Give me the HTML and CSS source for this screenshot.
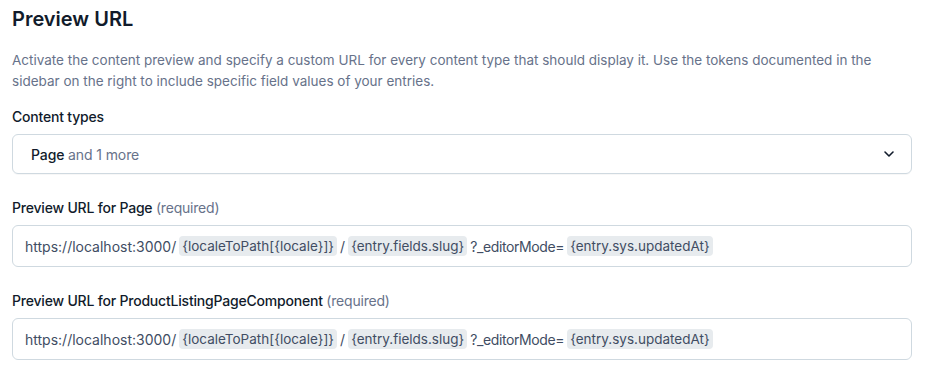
FILE: index.html
```html
<!DOCTYPE html>
<html>
<head>
  <link rel="stylesheet" href="styles.css">
</head>
<body>
  <div class="container">
    <h2 class="title">Preview URL</h2>

    <p class="description">
      Activate the content preview and specify a custom URL for every content type that should display it. Use the tokens documented in the sidebar on the right to include specific field values of your entries.
    </p>

    <div class="field">
      <label class="field-label">Content types</label>
      <div class="select-box">
        <span class="select-value">Page <span class="muted">and 1 more</span></span>
        <svg width="16" height="16" viewBox="0 0 16 16" fill="none" xmlns="http://www.w3.org/2000/svg">
          <path d="M4 6L8 10L12 6" stroke="currentColor" stroke-width="1.6" stroke-linecap="round" stroke-linejoin="round"/>
        </svg>
      </div>
    </div>

    <div class="field">
      <label class="field-label">Preview URL for Page <span class="muted">(required)</span></label>
      <div class="url-input">
        <span>https://localhost:3000/</span>
        <span class="token">{localeToPath[{locale}]}</span>
        <span>/</span>
        <span class="token">{entry.fields.slug}</span>
        <span class="query">?_editorMode=</span>
        <span class="token">{entry.sys.updatedAt}</span>
      </div>
    </div>

    <div class="field">
      <label class="field-label">Preview URL for ProductListingPageComponent <span class="muted">(required)</span></label>
      <div class="url-input">
        <span>https://localhost:3000/</span>
        <span class="token">{localeToPath[{locale}]}</span>
        <span>/</span>
        <span class="token">{entry.fields.slug}</span>
        <span class="query">?_editorMode=</span>
        <span class="token">{entry.sys.updatedAt}</span>
      </div>
    </div>
  </div>
</body>
</html>
```

FILE: styles.css
```css
body {
  font-family: Inter, sans-serif;
  margin: 0;
  padding: 5px 18px 0 12px;
  color: #111b2b;
  background: white;
}

.container {
  display: flex;
  flex-direction: column;
}

.title {
  font-size: 20px;
  font-weight: 600;
  line-height: 28px;
  margin: 0;
}

.description {
  margin: 17px 0 0;
  font-size: 13.5px;
  line-height: 21px;
  color: #67728a;
}

.field {
  display: flex;
  flex-direction: column;
  gap: 7px;
  margin-top: 15px;
}

.field + .field {
  margin-top: 24px;
}

.field-label {
  font-size: 14px;
  font-weight: 500;
  line-height: 20px;
  letter-spacing: -0.2px;
}

.muted {
  color: #67728a;
  font-weight: 400;
}

.select-box {
  display: flex;
  align-items: center;
  justify-content: space-between;
  height: 40px;
  box-sizing: border-box;
  padding: 0 14px 0 18px;
  border: 1px solid #cfd9e0;
  border-radius: 6px;
  font-size: 14px;
  letter-spacing: -0.1px;
  box-shadow: 0 1px 0 rgba(0, 0, 0, 0.03);
}

.select-value {
  font-weight: 500;
}

.url-input {
  display: flex;
  align-items: center;
  gap: 3px;
  height: 42px;
  box-sizing: border-box;
  padding: 0 12px;
  border: 1px solid #cfd9e0;
  border-radius: 6px;
  font-size: 14px;
  color: #414d63;
  white-space: nowrap;
}

.query {
  letter-spacing: -0.4px;
}

.token {
  background: #e7ebee;
  border-radius: 4px;
  padding: 0 3px;
  font-size: 13.5px;
  line-height: 20px;
}
```
